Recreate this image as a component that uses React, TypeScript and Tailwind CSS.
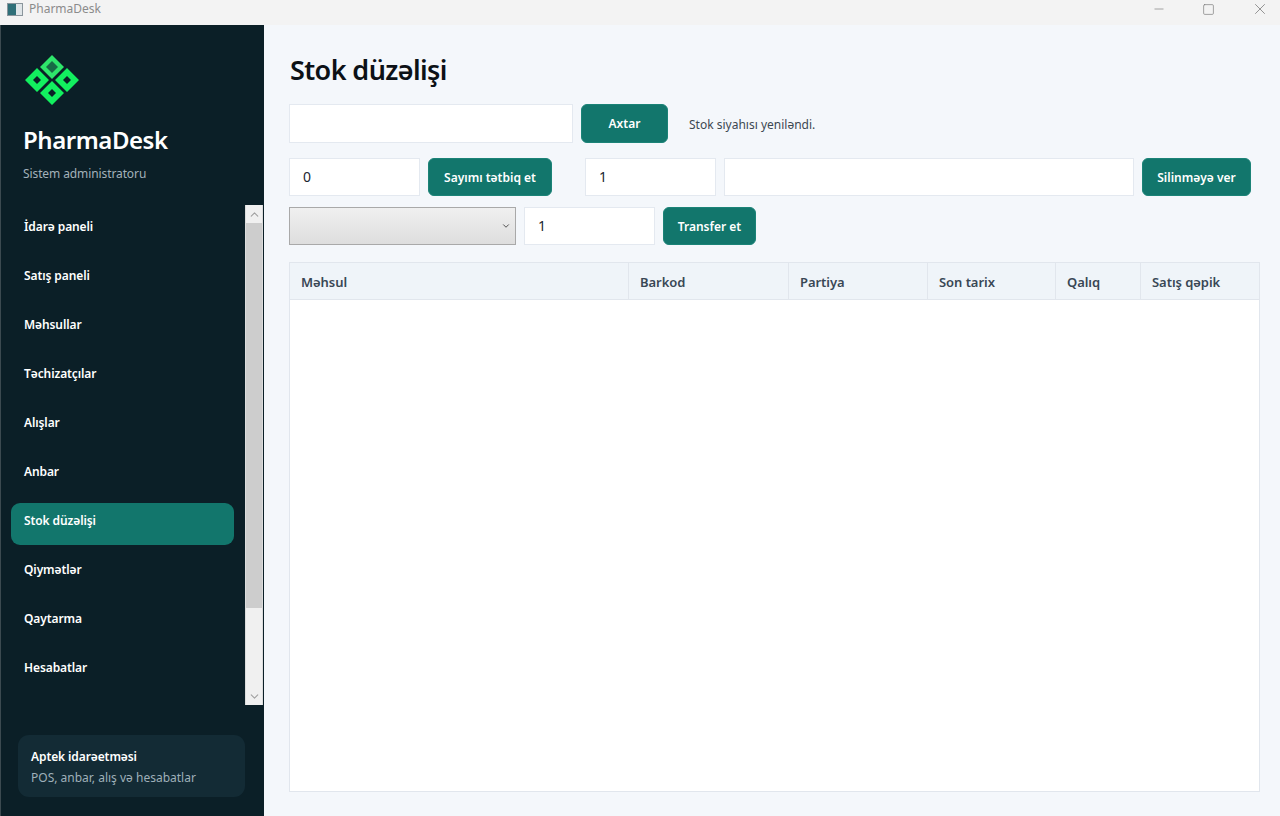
import { ChevronDown, ChevronUp, Minus, Square, X } from "lucide-react";

const navItems = [
  "İdarə paneli",
  "Satış paneli",
  "Məhsullar",
  "Təchizatçılar",
  "Alışlar",
  "Anbar",
  "Stok düzəlişi",
  "Qiymətlər",
  "Qaytarma",
  "Hesabatlar",
];

const columns = [
  { title: "Məhsul", width: "w-[339px]" },
  { title: "Barkod", width: "w-[160px]" },
  { title: "Partiya", width: "w-[139px]" },
  { title: "Son tarix", width: "w-[128px]" },
  { title: "Qalıq", width: "w-[85px]" },
  { title: "Satış qəpik", width: "flex-1" },
];

const Logo = () => (
  <svg width="54" height="52" viewBox="0 0 54 52">
    <path fill="#2ee66b" d="M27 1l12 12-12 12-12-12z" />
    <path fill="#176b45" d="M27 7l6 6-6 6-6-6z" />
    <path fillRule="evenodd" fill="#12ef5f" d="M12 14l12 12-12 12L0 26zm0 8l-4 4 4 4 4-4z" />
    <path fillRule="evenodd" fill="#12ef5f" d="M42 14l12 12-12 12-12-12zm0 8l-4 4 4 4 4-4z" />
    <path fillRule="evenodd" fill="#12ef5f" d="M27 27l12 12-12 12-12-12zm0 8l-4 4 4 4 4-4z" />
  </svg>
);

const Field = ({ value, width }: { value?: string; width: string }) => (
  <div className={`${width} bg-white border border-[#e4e9f0] pl-[13px] pb-[1px] flex items-center text-[14px] text-[#1b2530]`}>
    {value}
  </div>
);

const Action = ({ label, width }: { label: string; width: string }) => (
  <button className={`${width} rounded-[6px] bg-[#12766c] border border-[#1b8377] pt-[1px] text-white text-[12px] font-semibold`}>
    {label}
  </button>
);

export default function App() {
  return (
    <div className="w-[1280px] h-[816px] flex flex-col overflow-hidden bg-[#f4f7fb] font-['Noto_Sans',sans-serif]">
      <div className="h-[25px] bg-[#f3f3f3] flex items-center pl-[7px] pb-[7px] shrink-0">
        <div className="w-[16px] h-[13px] border border-[#8a959c] bg-[#dfe5e8] flex mr-[6px]">
          <div className="w-[8px] h-full bg-[#2f6f78]" />
        </div>
        <span className="text-[12px] text-[#8b8b8b]">PharmaDesk</span>
        <div className="ml-auto flex items-center text-[#747474]">
          <Minus size={14} strokeWidth={1.1} className="mr-[36px]" />
          <Square size={13} strokeWidth={1.2} className="mr-[36px]" />
          <X size={18} strokeWidth={1} className="mr-[11px]" />
        </div>
      </div>

      <div className="flex flex-1 min-h-0">
        <aside className="w-[264px] shrink-0 bg-[#0b1f27] border-l border-[#3c4a50] flex flex-col">
          <div className="pl-[22px] pt-[29px] h-[180px] shrink-0">
            <div className="ml-[2px]">
              <Logo />
            </div>
            <div className="mt-[17px] text-[24px] leading-[34px] tracking-[-0.45px] font-semibold text-white">PharmaDesk</div>
            <div className="mt-[8px] text-[12px] leading-[18px] tracking-[-0.1px] text-[#a3b1ba]">Sistem administratoru</div>
          </div>

          <div className="h-[500px] flex shrink-0">
            <nav className="w-[244px] flex flex-col gap-[7px] pl-[10px] pr-[11px] pt-[4px]">
              {navItems.map((item) => (
                <div
                  key={item}
                  className={`h-[42px] shrink-0 rounded-[9px] pl-[13px] pb-[6px] flex items-center text-[12px] tracking-[-0.1px] font-semibold text-white ${
                    item === "Stok düzəlişi" ? "bg-[#12766c]" : ""
                  }`}
                >
                  {item}
                </div>
              ))}
            </nav>
            <div className="w-[18px] flex flex-col bg-[#f0f0f0] border-x border-[#dcdcdc]">
              <div className="h-[18px] flex items-center justify-center text-[#a0a0a0]">
                <ChevronUp size={13} />
              </div>
              <div className="h-[385px] bg-[#cdcdcd]" />
              <div className="flex-1" />
              <div className="h-[18px] flex items-center justify-center text-[#a0a0a0]">
                <ChevronDown size={13} />
              </div>
            </div>
          </div>

          <div className="ml-[17px] mt-[30px] w-[227px] h-[62px] rounded-[11px] bg-[#132b35] pl-[13px] pt-[13px]">
            <div className="text-[12px] leading-[18px] tracking-[-0.1px] font-semibold text-white">Aptek idarəetməsi</div>
            <div className="mt-[3px] text-[12px] leading-[18px] text-[#9fb0b9]">POS, anbar, alış və hesabatlar</div>
          </div>
        </aside>

        <main className="flex-1 pl-[25px] pr-[20px] pt-[25px] flex flex-col min-w-0">
          <h1 className="h-[54px] pl-[1px] text-[27px] leading-[40px] tracking-[-0.6px] font-semibold text-[#0c1116]">Stok düzəlişi</h1>

          <div className="flex gap-[8px] h-[39px]">
            <Field width="w-[284px]" />
            <Action label="Axtar" width="w-[87px]" />
            <span className="ml-[13px] self-center pt-[3px] text-[12px] text-[#3d4852]">Stok siyahısı yeniləndi.</span>
          </div>

          <div className="mt-[15px] flex gap-[8px] h-[38px]">
            <Field value="0" width="w-[131px]" />
            <Action label="Sayımı tətbiq et" width="w-[124px]" />
            <div className="w-[17px]" />
            <Field value="1" width="w-[131px]" />
            <Field width="w-[410px]" />
            <Action label="Silinməyə ver" width="w-[109px]" />
          </div>

          <div className="mt-[11px] flex gap-[8px] h-[38px]">
            <div className="w-[227px] border border-[#a9a9a9] bg-gradient-to-b from-[#f0f0f0] to-[#dedede] flex items-center justify-end pr-[4px] text-[#444]">
              <ChevronDown size={10} strokeWidth={2.2} />
            </div>
            <Field value="1" width="w-[131px]" />
            <Action label="Transfer et" width="w-[93px]" />
          </div>

          <div className="mt-[17px] mb-[24px] flex-1 bg-white border border-[#e1e6ed]">
            <div className="flex h-[37px] bg-[#eff4f9] border-b border-[#e1e6ed]">
              {columns.map((col) => (
                <div
                  key={col.title}
                  className={`${col.width} pl-[11px] pt-[3px] flex items-center text-[13px] tracking-[-0.05px] font-semibold text-[#394755] border-r border-[#e1e6ed] last:border-r-0`}
                >
                  {col.title}
                </div>
              ))}
            </div>
          </div>
        </main>
      </div>
    </div>
  );
}
